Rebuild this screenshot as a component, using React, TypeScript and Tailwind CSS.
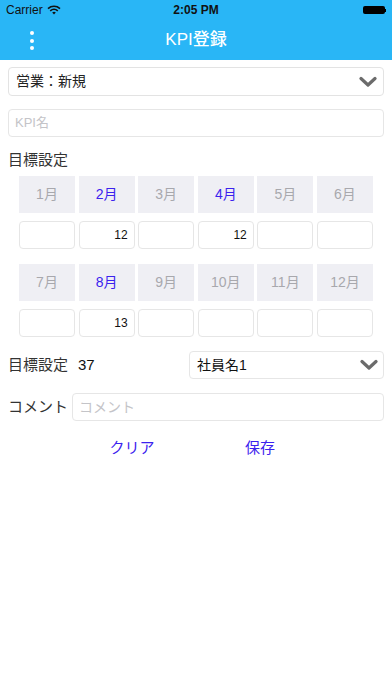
import React from "react";

const font = { fontFamily: '"Liberation Sans", "Noto Sans CJK JP", sans-serif' };

const firstHalf = [
  { m: "1月", active: false, v: "" },
  { m: "2月", active: true, v: "12" },
  { m: "3月", active: false, v: "" },
  { m: "4月", active: true, v: "12" },
  { m: "5月", active: false, v: "" },
  { m: "6月", active: false, v: "" },
];

const secondHalf = [
  { m: "7月", active: false, v: "" },
  { m: "8月", active: true, v: "13" },
  { m: "9月", active: false, v: "" },
  { m: "10月", active: false, v: "" },
  { m: "11月", active: false, v: "" },
  { m: "12月", active: false, v: "" },
];

function Chevron() {
  return (
    <svg width="18" height="12" viewBox="0 0 18 12" className="shrink-0">
      <path d="M2 2.5 L9 9 L16 2.5" fill="none" stroke="#6b6b6b" strokeWidth="3.2" strokeLinecap="round" strokeLinejoin="round" />
    </svg>
  );
}

function MonthBlock({ items }: { items: { m: string; active: boolean; v: string }[] }) {
  return (
    <div className="flex flex-col gap-[8px] pl-[19px]">
      <div className="flex gap-[3.6px]">
        {items.map((it) => (
          <div
            key={it.m}
            className={`flex h-[37px] w-[56px] items-center justify-center bg-[#efeff4] text-[14px] ${
              it.active ? "text-[#3b22ee]" : "text-[#a8a8ad]"
            }`}
          >
            {it.m}
          </div>
        ))}
      </div>
      <div className="flex gap-[3.6px]">
        {items.map((it) => (
          <div
            key={it.m}
            className="flex h-[28px] w-[56px] items-center justify-end rounded-[4px] border border-[#e6e6e6] bg-white pr-[6px] text-[12px] text-[#111]"
          >
            {it.v}
          </div>
        ))}
      </div>
    </div>
  );
}

export default function App() {
  return (
    <div className="h-[696px] w-[392px] overflow-hidden bg-white" style={font}>
      <div className="bg-[#29b6f6]">
        <div className="relative flex h-[20px] items-center px-[6px] text-[12px] text-[#111]">
          <span className="flex items-center gap-[4px]">
            Carrier
            <svg width="14" height="10" viewBox="0 0 14 10">
              <path d="M1 3.6 A9 9 0 0 1 13 3.6" fill="none" stroke="#111" strokeWidth="1.6" />
              <path d="M3.2 5.8 A6 6 0 0 1 10.8 5.8" fill="none" stroke="#111" strokeWidth="1.6" />
              <path d="M7 9.6 L5.2 7.6 A2.8 2.8 0 0 1 8.8 7.6 Z" fill="#111" />
            </svg>
          </span>
          <span className="absolute left-1/2 -translate-x-1/2 font-bold">2:05 PM</span>
          <span className="ml-auto flex items-center">
            <span className="block h-[8px] w-[22px] rounded-[2px] bg-black" />
            <span className="block h-[3px] w-[1.5px] bg-black" />
          </span>
        </div>
        <div className="relative flex h-[40px] items-center justify-center">
          <div className="absolute left-[30px] top-[11px] flex flex-col gap-[3.5px]">
            <span className="block h-[4px] w-[4px] rounded-full bg-white" />
            <span className="block h-[4px] w-[4px] rounded-full bg-white" />
            <span className="block h-[4px] w-[4px] rounded-full bg-white" />
          </div>
          <span className="text-[17px] font-medium text-white">KPI登録</span>
        </div>
      </div>

      <div className="flex flex-col px-[8px] pt-[7px]">
        <div className="flex h-[29px] items-center justify-between rounded-[4px] border border-[#e3e3e3] pl-[7px] pr-[6px] text-[14px] text-[#222]">
          <span>営業：新規</span>
          <Chevron />
        </div>

        <div className="mt-[13px] flex h-[28px] items-center rounded-[4px] border border-[#e6e6e6] px-[6px] text-[13px] text-[#c4c4c8]">
          KPI名
        </div>

        <div className="mt-[13px] text-[15px] leading-[20px] text-[#333]">目標設定</div>

        <div className="mt-[6px] -ml-[8px] flex flex-col gap-[15px]">
          <MonthBlock items={firstHalf} />
          <MonthBlock items={secondHalf} />
        </div>

        <div className="mt-[14px] flex items-center">
          <span className="text-[15px] text-[#333]">目標設定</span>
          <span className="ml-[10px] text-[15px] text-[#111]">37</span>
          <div className="ml-auto flex h-[28px] w-[195px] items-center justify-between rounded-[4px] border border-[#e6e6e6] pl-[7px] pr-[5px] text-[14px] text-[#111]">
            <span>社員名1</span>
            <Chevron />
          </div>
        </div>

        <div className="mt-[14px] flex items-center">
          <span className="text-[15px] text-[#333]">コメント</span>
          <div className="ml-auto flex h-[28px] w-[312px] items-center rounded-[4px] border border-[#e6e6e6] px-[6px] text-[14px] text-[#c4c4c8]">
            コメント
          </div>
        </div>

        <div className="-mx-[8px] mt-[16px] flex justify-center">
          <button type="button" className="w-[128px] text-[15px] text-[#3b22ee]">クリア</button>
          <button type="button" className="w-[128px] text-[15px] text-[#3b22ee]">保存</button>
        </div>
      </div>
    </div>
  );
}
